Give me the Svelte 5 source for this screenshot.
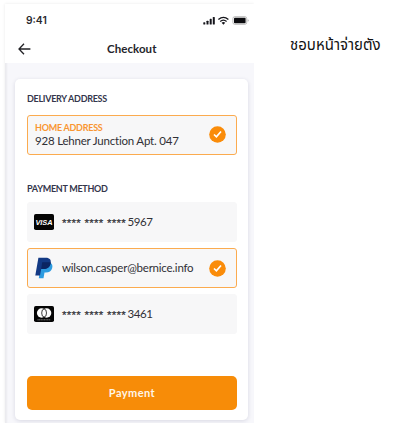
<script>
  const cards = [
    { kind: 'visa', tail: '5967' },
    { kind: 'paypal', text: 'wilson.casper@bernice.info' },
    { kind: 'diners', tail: '3461' }
  ];
</script>

{#snippet check()}
  <svg class="check" width="17" height="17" viewBox="0 0 17 17">
    <circle cx="8.5" cy="8.5" r="8.3" fill="#fa8c0a" />
    <path d="M5 8.5 7.4 10.8 12 5.5" fill="none" stroke="#fff" stroke-width="1.7" />
  </svg>
{/snippet}

<div class="page">
  <main class="phone">
    <header>
      <div class="status">
        <span class="time">9:41</span>
        <svg width="46" height="10" viewBox="0 0 46 10">
          <g fill="#15151b">
            <rect x="0.3" y="6.2" width="2" height="2.3" rx=".6" />
            <rect x="3.5" y="4.7" width="2" height="3.8" rx=".6" />
            <rect x="6.7" y="2.8" width="2" height="5.7" rx=".6" />
            <rect x="9.8" y="0.9" width="2" height="7.6" rx=".6" />
          </g>
          <g fill="none" stroke="#15151b" stroke-width="1.3">
            <path d="M15.4 3.5Q20.4-.8 25.4 3.5" />
            <path d="M17.2 5.5Q20.4 2.8 23.6 5.5" />
          </g>
          <path d="M18.6 6.7Q20.4 5.3 22.2 6.7L20.4 8.8Z" fill="#15151b" />
          <rect x="29.9" y=".7" width="13.8" height="7.6" rx="1.8" fill="#fff" stroke="#aaa" stroke-width=".8" />
          <rect x="31" y="1.7" width="11.6" height="5.6" rx=".8" fill="#0c0c0f" />
          <path d="M44.7 3.3q1 .5 1 1.2t-1 1.2z" fill="#aaa" />
        </svg>
      </div>
      <div class="nav">
        <svg width="13" height="12" viewBox="0 0 13 12">
          <path d="M6 .8 1 6 6 11.2M1.2 6H12.4" fill="none" stroke="#222226" stroke-width="1.3" />
        </svg>
        <h1>Checkout</h1>
      </div>
    </header>

    <section class="card">
      <h2 class="delivery">DELIVERY ADDRESS</h2>
      <div class="box selected address">
        <div class="lines">
          <span class="label">HOME ADDRESS</span>
          <span class="street">928 Lehner Junction Apt. 047</span>
        </div>
        {@render check()}
      </div>

      <h2 class="method">PAYMENT METHOD</h2>
      <div class="rows">
        {#each cards as c}
          <div class="box row" class:selected={c.kind === 'paypal'}>
            {#if c.kind === 'visa'}
              <svg class="logo" width="20" height="16" viewBox="0 0 20 16">
                <rect width="20" height="16" rx="1.8" fill="#050505" />
                <text x="1.4" y="11" textLength="17.2" lengthAdjust="spacingAndGlyphs" font-family="Liberation Sans, sans-serif" font-size="8" font-weight="700" font-style="italic" fill="#fff">VISA</text>
              </svg>
            {:else if c.kind === 'paypal'}
              <svg class="logo" width="20" height="22" viewBox="0 0 20 22">
                <path d="M7.2 5.2H15c3 .8 4 3 3.2 5.8-.8 3.2-3 4.5-6.4 4.5h-1.3l-1 5.8H4.8z" fill="#2d9be0" />
                <path d="M4.4.8h7.4c4 0 5.6 2.2 4.8 5.7-.8 3.9-3.4 5.5-7.2 5.5H7.2L6 18.4H1.3z" fill="#123984" />
                <path d="M8.2 5.2h8.5c-.2 4.4-3 6.8-7.3 6.8H7.2z" fill="#0b2562" />
              </svg>
            {:else}
              <svg class="logo" width="20" height="16" viewBox="0 0 20 16">
                <rect width="20" height="16" rx="1.8" fill="#050505" />
                <circle cx="7.6" cy="7" r="4.7" fill="#fff" />
                <circle cx="12.6" cy="7" r="4.7" fill="#fff" />
                <ellipse cx="10.1" cy="7" rx="2.4" ry="4" fill="#fff" stroke="#111" stroke-width=".8" />
                <path d="M3.5 13.8h13" stroke="#999" stroke-width=".8" stroke-dasharray="1.2 .4" />
              </svg>
            {/if}
            {#if c.tail}
              <span class="stars">**** **** ****</span><span class="tail">{c.tail}</span>
            {:else}
              <span class="mail">{c.text}</span>
              {@render check()}
            {/if}
          </div>
        {/each}
      </div>
      <button>Payment</button>
    </section>
  </main>
  <p class="note">ชอบหน้าจ่ายตัง</p>
</div>

<style>
  :global(body) { background: #fff; }
  .page {
    display: flex;
    width: 407px;
    height: 423px;
    overflow: hidden;
    padding: 4px 0 0 5px;
    box-sizing: border-box;
    background: #fff;
    font-family: Lato, sans-serif;
    color: #303036;
  }
  .phone {
    width: 249px;
    height: 419px;
    flex: none;
    background: #f7f7fb;
    box-shadow: 0 0 3px rgba(0, 0, 0, .09), inset 3px 0 2px -1px rgba(0, 0, 0, .05);
    clip-path: inset(-4px 0 0 -4px);
  }
  header {
    height: 59px;
    background: #fff;
    box-sizing: border-box;
    padding: 11px 5px 0 13px;
  }
  .status { display: flex; justify-content: space-between; height: 11px; padding-left: 8px; }
  .status svg { margin-top: 1px; }
  .time { font: 600 10.3px/11px Inter, sans-serif; color: #29292e; }
  .nav { display: flex; align-items: center; height: 14px; margin-top: 12px; padding-top: 4px; }
  h1 { margin: 0 0 0 76px; font-size: 11.5px; line-height: 14px; font-weight: 700; letter-spacing: .06px; color: #25252b; }
  .card {
    width: 233px;
    height: 341px;
    margin: 16px 0 0 10px;
    padding: 13px 11px 0 12px;
    box-sizing: border-box;
    border-radius: 5px;
    background: #fff;
    box-shadow: 0 1px 4px rgba(30, 30, 80, .14);
  }
  h2 { margin: 0; font-size: 9px; line-height: 13px; font-weight: 700; letter-spacing: -.28px; color: #34364c; white-space: nowrap; }
  .box {
    display: flex;
    align-items: center;
    height: 40px;
    box-sizing: border-box;
    border: 1px solid #f7f7f8;
    border-radius: 3px;
    background: #f7f7f8;
    padding: 0 10px 0 6px;
    white-space: nowrap;
  }
  .selected { border-color: #fbab4f; }
  .address { margin-top: 10px; padding-left: 7px; padding-bottom: 2px; }
  .lines { display: flex; flex-direction: column; }
  .label { font-size: 9px; line-height: 11px; font-weight: 700; letter-spacing: -.25px; color: #f99632; padding-top: 2px; }
  .street { font-size: 11.5px; line-height: 15px; letter-spacing: -.2px; }
  .check { margin-left: auto; flex: none; }
  .method { margin-top: 27px; }
  .rows { display: flex; flex-direction: column; gap: 6px; margin-top: 7px; }
  .logo { flex: none; margin-right: 8px; }
  .stars { font: 400 11.5px/14px "Liberation Sans", sans-serif; -webkit-text-stroke: .2px #303036; letter-spacing: .28px; padding-top: 1px; }
  .tail { font-size: 11.5px; line-height: 14px; margin-left: 1.5px; letter-spacing: -.4px; }
  .mail { font-size: 11.5px; line-height: 14px; letter-spacing: -.22px; }
  button {
    display: block;
    width: 210px;
    height: 34px;
    margin: 42px 0 0;
    padding: 0;
    border: 0;
    border-radius: 5px;
    background: #f78c08;
    color: #fff5e7;
    font: 700 11px/34px Lato, sans-serif;
    letter-spacing: .45px;
  }
  .note {
    margin: 31px 0 0 36px;
    font: 15px/22px "Noto Sans Thai", "Noto Sans", sans-serif;
    color: #111;
    white-space: nowrap;
  }
</style>
